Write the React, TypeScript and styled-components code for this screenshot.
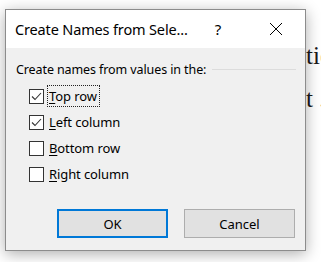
import styled, { createGlobalStyle } from 'styled-components';

const GlobalStyle = createGlobalStyle`
  html, body {
    margin: 0;
    padding: 0;
    background: #ffffff;
  }
  body {
    font-family: "Noto Sans", "Open Sans", "Liberation Sans", sans-serif;
  }
`;

const Page = styled.div`
  position: relative;
  width: 321px;
  height: 262px;
  overflow: hidden;
  background: #ffffff;
`;

const DocText = styled.div`
  padding: 34px 0 0 306px;
  font-family: "Liberation Serif", "DejaVu Serif", serif;
  font-size: 25px;
  line-height: 43px;
  color: #1a1a1a;
  white-space: nowrap;
`;

const Dialog = styled.div`
  position: absolute;
  left: 5px;
  top: 9px;
  width: 301px;
  height: 242px;
  box-sizing: border-box;
  border: 1px solid #8c8c8c;
  background: #f0f0f0;
  display: flex;
  flex-direction: column;
  box-shadow: 0 3px 14px rgba(0, 0, 0, 0.32);
`;

const TitleBar = styled.div`
  height: 38px;
  display: flex;
  align-items: center;
  background: #ffffff;
`;

const Title = styled.div`
  flex: 1;
  min-width: 0;
  overflow: hidden;
  padding-left: 9px;
  font-size: 14.5px;
  letter-spacing: -0.15px;
  color: #000000;
  white-space: nowrap;
`;

const CaptionButton = styled.div`
  flex: none;
  width: 58px;
  height: 38px;
  display: flex;
  align-items: center;
  justify-content: center;
  font-size: 15px;
  color: #000000;
`;

const Body = styled.div`
  flex: 1;
  display: flex;
  flex-direction: column;
  padding: 12px 9px 12px 10px;
`;

const GroupHeader = styled.div`
  height: 18px;
  display: flex;
  align-items: center;
  gap: 6px;
  font-size: 12.5px;
  letter-spacing: -0.1px;
  color: #000000;
  white-space: nowrap;
`;

const Rule = styled.div`
  flex: 1;
  height: 1px;
  background: #dcdcdc;
`;

const OptionList = styled.div`
  margin-top: 5px;
  margin-left: 13px;
  display: flex;
  flex-direction: column;
`;

const OptionRow = styled.div`
  height: 26px;
  display: flex;
  align-items: center;
`;

const Box = styled.div`
  width: 15px;
  height: 15px;
  box-sizing: border-box;
  border: 1px solid #333333;
  background: #ffffff;
  display: flex;
  align-items: center;
  justify-content: center;
`;

const Label = styled.span<{ $focused?: boolean }>`
  margin-left: 3px;
  padding: 0 2px 0 1px;
  height: 20px;
  line-height: 20px;
  border: 1px dotted ${props => (props.$focused ? '#222222' : 'transparent')};
  font-size: 13px;
  letter-spacing: -0.1px;
  color: #000000;
`;

const Key = styled.u`
  text-decoration-thickness: 1px;
  text-underline-offset: 2px;
`;

const ButtonRow = styled.div`
  margin-top: auto;
  display: flex;
  justify-content: flex-end;
  gap: 16px;
  padding-right: 1px;
`;

const Button = styled.div<{ $default?: boolean }>`
  width: 111px;
  height: 29px;
  box-sizing: border-box;
  border: ${props => (props.$default ? '2px solid #0078d7' : '1px solid #adadad')};
  background: #e1e1e1;
  display: flex;
  align-items: center;
  justify-content: center;
  font-size: 13px;
  color: #000000;
`;

const options = [
  { key: 'T', rest: 'op row', checked: true, focused: true },
  { key: 'L', rest: 'eft column', checked: true },
  { key: 'B', rest: 'ottom row', checked: false },
  { key: 'R', rest: 'ight column', checked: false },
];

const Check = () => (
  <svg width="13" height="13" viewBox="0 0 13 13">
    <polyline points="2,6.5 5,9.5 11,3" fill="none" stroke="#333333" strokeWidth="1.1" />
  </svg>
);

const CloseIcon = () => (
  <svg width="14" height="14" viewBox="0 0 14 14">
    <line x1="1" y1="1" x2="13" y2="13" stroke="#000000" strokeWidth="1" />
    <line x1="13" y1="1" x2="1" y2="13" stroke="#000000" strokeWidth="1" />
  </svg>
);

export default function App() {
  return (
    <Page>
      <GlobalStyle />
      <DocText>
        <div>tié</div>
        <div>t .</div>
      </DocText>
      <Dialog>
        <TitleBar>
          <Title>Create Names from Sele...</Title>
          <CaptionButton>?</CaptionButton>
          <CaptionButton>
            <CloseIcon />
          </CaptionButton>
        </TitleBar>
        <Body>
          <GroupHeader>
            <span>Create names from values in the:</span>
            <Rule />
          </GroupHeader>
          <OptionList>
            {options.map(o => (
              <OptionRow key={o.key}>
                <Box>{o.checked && <Check />}</Box>
                <Label $focused={o.focused}>
                  <Key>{o.key}</Key>
                  {o.rest}
                </Label>
              </OptionRow>
            ))}
          </OptionList>
          <ButtonRow>
            <Button $default>OK</Button>
            <Button>Cancel</Button>
          </ButtonRow>
        </Body>
      </Dialog>
    </Page>
  );
}
